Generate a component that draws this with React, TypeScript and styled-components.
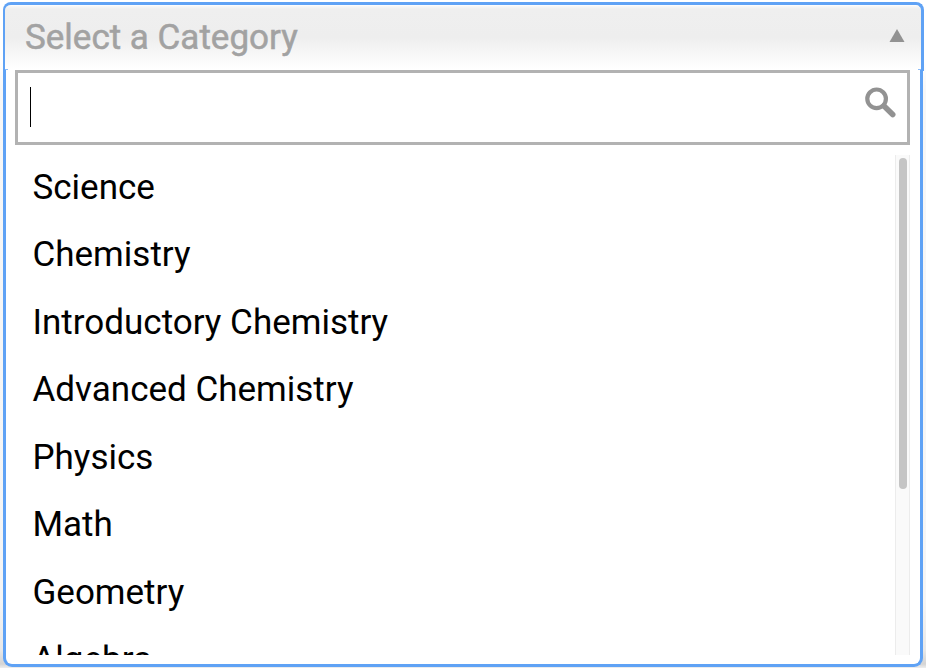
import React from 'react';
import styled, { createGlobalStyle } from 'styled-components';

const PageStyle = createGlobalStyle`
  * { box-sizing: border-box; }
  body { margin: 0; background: #fff; font-family: Roboto, sans-serif; overflow: hidden; }
`;

const Page = styled.main`
  height: 668px;
  padding: 2px 2px 1px 3px;
  background: linear-gradient(to bottom, #fff 60px, #f7f7f7 90px, #f5f5f5 600px, #e8e8e8 650px, #d4d4d4 664px, #eee 668px);
`;

const Select = styled.div`
  display: flex;
  flex-direction: column;
  height: 665px;
`;

const Trigger = styled.div`
  position: relative;
  display: flex;
  justify-content: space-between;
  flex: none;
  height: 69px;
  padding: 12px 16px 0 20px;
  color: #a2a2a2;
  font-size: 35px;
  line-height: 41px;
  border: solid #5fa2f5;
  border-width: 3px 3px 0 2px;
  border-radius: 8px 8px 0 0;
  background: linear-gradient(to bottom, #fff 0, #f4f4f4 2px, #efefef 4px, #eee 32px, #fff 64px);

  &::before,
  &::after {
    content: '';
    position: absolute;
    bottom: 1px;
    width: 3px;
    height: 1px;
    background: #8bbbf8;
  }
  &::before { left: 0; }
  &::after { right: 0; }
`;

const Placeholder = styled.span`
  -webkit-text-stroke: 0.5px #a2a2a2;
`;

const Arrow = styled.svg`
  width: 16px;
  height: 14px;
  margin-top: 12px;
  fill: #929292;
`;

const Menu = styled.div`
  position: relative;
  flex: 1;
  min-height: 0;
  display: flex;
  flex-direction: column;
  width: 920px;
  margin-top: -1px;
  padding: 0 10px 9px 9px;
  border: solid #5fa2f5;
  border-width: 0 3px 3px;
  border-radius: 0 0 9px 9px;
  background: #fff;
`;

const SearchBox = styled.div`
  flex: none;
  display: flex;
  justify-content: space-between;
  height: 75px;
  padding: 14px 11px 0 12px;
  border: 3px solid #b2b2b2;
  background: #fff;
`;

const Caret = styled.span`
  width: 1px;
  height: 40px;
  background: #000;
`;

const SearchIcon = styled.svg`
  width: 32px;
  height: 32px;
  fill: none;
  stroke: #929292;
`;

const Results = styled.div`
  display: flex;
  justify-content: space-between;
  height: 500px;
  margin-top: 10px;
  overflow: hidden;
`;

const Options = styled.ul`
  flex: 1;
  margin: 0;
  padding: 0 0 0 17.5px;
  list-style: none;
`;

const Option = styled.li`
  height: 67.5px;
  padding-top: 11.6px;
  color: #000;
  font-size: 35px;
  line-height: 41px;
  white-space: nowrap;
`;

const Track = styled.div`
  width: 15px;
  height: 500px;
  padding: 3px 2px 0 3px;
  border: solid #ececec;
  border-width: 0 1px;
  background: #fafafa;
`;

const Thumb = styled.div`
  width: 8px;
  height: 331px;
  border-radius: 4px;
  background: #c5c5c5;
`;

const categories = [
  'Science', 'Chemistry', 'Introductory Chemistry', 'Advanced Chemistry',
  'Physics', 'Math', 'Geometry', 'Algebra',
];

export default function App() {
  return (
    <Page>
      <PageStyle />
      <Select>
        <Trigger>
          <Placeholder>Select a Category</Placeholder>
          <Arrow viewBox="0 0 16 14"><path d="M8 0 15.5 13H.5Z" /></Arrow>
        </Trigger>
        <Menu>
          <SearchBox>
            <Caret />
            <SearchIcon viewBox="0 0 32 32">
              <circle cx="12.6" cy="11.8" r="9.3" strokeWidth="4.2" />
              <path d="m20 19 8.7 8.5" strokeWidth="5.6" strokeLinecap="round" />
            </SearchIcon>
          </SearchBox>
          <Results>
            <Options>
              {categories.map((name) => <Option key={name}>{name}</Option>)}
            </Options>
            <Track><Thumb /></Track>
          </Results>
        </Menu>
      </Select>
    </Page>
  );
}
